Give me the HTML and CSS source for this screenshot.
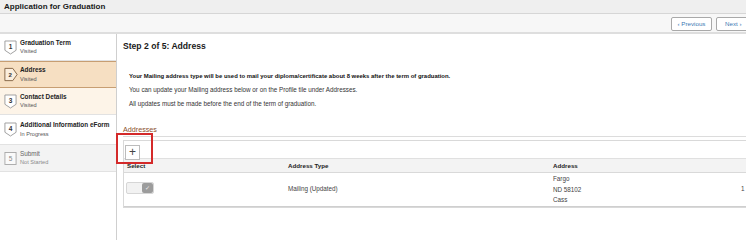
FILE: index.html
```html
<!DOCTYPE html>
<html>
<head>
<meta charset="utf-8">
<link rel="stylesheet" href="styles.css">
</head>
<body>
<div class="titlebar">Application for Graduation</div>
<div class="toolbar">
  <button class="navbtn prev">&#x2039; Previous</button>
  <button class="navbtn next">Next &#x203A;</button>
</div>
<div class="layout">
  <nav class="steps">
    <div class="step visited">
      <svg class="badge" viewBox="0 0 14 16"><path d="M1 1H13V11L7 15L1 11Z" fill="#fff" stroke="#9a9a9a" stroke-width="1"/><text x="7" y="10" text-anchor="middle">1</text></svg>
      <div class="stext"><div class="sname">Graduation Term</div><div class="sstat">Visited</div></div>
    </div>
    <div class="step active">
      <svg class="badge" viewBox="0 0 16 16"><path d="M1 1H10L15 8L10 15H1Z" fill="#fbeedd" stroke="#7a5a3a" stroke-width="1"/><text x="7" y="11" text-anchor="middle">2</text></svg>
      <div class="stext"><div class="sname">Address</div><div class="sstat">Visited</div></div>
    </div>
    <div class="step light">
      <svg class="badge" viewBox="0 0 14 16"><path d="M1 1H13V11L7 15L1 11Z" fill="#fff" stroke="#9a9a9a" stroke-width="1"/><text x="7" y="10" text-anchor="middle">3</text></svg>
      <div class="stext"><div class="sname">Contact Details</div><div class="sstat">Visited</div></div>
    </div>
    <div class="step tall">
      <svg class="badge" viewBox="0 0 14 16"><path d="M1 1H13V11L7 15L1 11Z" fill="#fff" stroke="#9a9a9a" stroke-width="1"/><text x="7" y="10" text-anchor="middle">4</text></svg>
      <div class="stext"><div class="sname">Additional Information eForm</div><div class="sstat">In Progress</div></div>
    </div>
    <div class="step disabled">
      <svg class="badge" viewBox="0 0 14 16"><rect x="1" y="1.5" width="12" height="13" fill="#fafafa" stroke="#a8a8a8" stroke-width="1"/><text x="7" y="11" text-anchor="middle">5</text></svg>
      <div class="stext"><div class="sname">Submit</div><div class="sstat">Not Started</div></div>
    </div>
  </nav>
  <main class="main">
    <h1 class="steptitle">Step 2 of 5: Address</h1>
    <div class="info">
      <p class="strong">Your Mailing address type will be used to mail your diploma/certificate about 8 weeks after the term of graduation.</p>
      <p>You can update your Mailing address below or on the Profile tile under Addresses.</p>
      <p>All updates must be made before the end of the term of graduation.</p>
    </div>
    <div class="section">
      <div class="sechead">Addresses</div>
      <div class="grid">
        <div class="gridbar"><button class="addbtn">+</button></div>
        <div class="row head">
          <div class="c1">Select</div><div class="c2">Address Type</div><div class="c3">Address</div><div class="c4"></div>
        </div>
        <div class="row data">
          <div class="c1"><span class="toggle"><span class="knob">&#x2713;</span></span></div>
          <div class="c2">Mailing (Updated)</div>
          <div class="c3"><div>Fargo</div><div>ND 58102</div><div>Cass</div></div>
          <div class="c4">1</div>
        </div>
      </div>
      <div class="highlight"></div>
    </div>
  </main>
</div>
</body>
</html>
```

FILE: styles.css
```css
* { box-sizing: border-box; }
html, body { margin: 0; padding: 0; }
body {
  width: 746px; height: 240px; overflow: hidden;
  font-family: "Liberation Sans", Arial, sans-serif;
  color: #222; background: #fff;
}
.titlebar {
  height: 14px; background: #efefef; border-bottom: 1px solid #d6d6d6;
  font-size: 8px; font-weight: bold; line-height: 13px; padding-left: 4px; color: #1a1a1a;
}
.toolbar {
  height: 20px; background: #f7f7f7; border-bottom: 2px solid #dedede;
  display: flex; justify-content: flex-end; align-items: center; gap: 4px; padding-top: 1px;
}
.navbtn {
  height: 14px; padding: 0; margin: 0; border: 1px solid #a9a9a9; border-radius: 2px;
  background: #fff; color: #3c78b4; font-family: "Liberation Sans", Arial, sans-serif;
  font-size: 6.2px; line-height: 12px;
}
.prev { width: 41px; }
.next { width: 32px; margin-right: -2px; text-align: left; padding-left: 8px; }
.layout { display: flex; height: 206px; }
.steps { width: 117px; border-right: 1px solid #cfcfcf; background: #fff; flex: none; }
.step {
  height: 27px; display: flex; align-items: center; gap: 3px; padding-left: 4px;
  border-bottom: 1px solid #e2e2e2;
}
.step.tall { height: 30px; }
.step.active { background: #f6dfc2; border: 1px solid #c79e72; border-left: none; border-right: none; height: 27px; }
.step.light { background: #fdf4e8; }
.step.disabled { background: #f3f3f3; }
.badge { width: 13px; height: 15px; flex: none; }
.active .badge { width: 14px; margin-right: -1px; }
.badge text { font-family: "Liberation Sans", Arial, sans-serif; font-size: 7px; font-weight: bold; fill: #333; }
.disabled .badge text { fill: #888; font-weight: normal; }
.stext { line-height: 8.5px; }
.sname { font-size: 6.4px; font-weight: bold; color: #222; white-space: nowrap; }
.sstat { font-size: 5.6px; color: #555; }
.disabled .sname { color: #666; font-weight: normal; }
.disabled .sstat { color: #8a8a8a; }
.main { flex: 1; padding-left: 6px; min-width: 0; }
.steptitle { margin: 0; font-size: 8.6px; font-weight: bold; line-height: 12px; padding-top: 6px; color: #1a1a1a; }
.info { padding-left: 6px; padding-top: 17px; }
.info p { margin: 0; font-size: 6.3px; line-height: 14px; color: #333; white-space: nowrap; }
.info p.strong { font-weight: bold; color: #111; font-size: 5.95px; }
.section { position: relative; margin-top: 14px; }
.sechead {
  font-size: 7.2px; color: #8a4f2b; line-height: 10px; border-bottom: 1px solid #dcdcdc;
  padding-bottom: 1px; margin-right: -10px;
}
.grid { margin-top: 3px; border: 1px solid #d9d9d9; border-right: none; margin-right: -10px; }
.gridbar { height: 18px; padding: 1px 0 0 1px; border-bottom: 1px solid #e0e0e0; }
.addbtn {
  width: 15px; height: 15px; padding: 0; margin: 0; border: 1px solid #bcbcbc; background: #fff;
  font-family: "Liberation Sans", Arial, sans-serif; font-size: 12px; line-height: 11px; color: #444;
}
.row { display: flex; }
.row.head {
  height: 14px; background: #f3f3f3; border-bottom: 1px solid #d9d9d9; font-size: 6.2px;
  font-weight: bold; line-height: 13px; color: #222;
}
.c1 { width: 164px; padding-left: 3px; }
.c2 { width: 265px; }
.c3 { width: 188px; }
.c4 { flex: 1; }
.row.data { height: 34px; font-size: 6.3px; color: #444; border-bottom: 1px solid #cfcfcf; }
.row.data .c1 { padding-top: 9px; padding-left: 2px; }
.row.data .c2 { line-height: 32px; }
.row.data .c3 { line-height: 10.5px; padding-top: 1px; }
.row.data .c4 { line-height: 32px; }
.toggle {
  display: flex; justify-content: flex-end; width: 28px; height: 12px; border: 1px solid #d6d6d6;
  border-radius: 2px; background: #f2f2f2;
}
.knob {
  width: 11px; height: 10px; background: #9c9c9c; border-radius: 2px; color: #eee;
  font-size: 6px; line-height: 10px; text-align: center;
}
.highlight {
  position: absolute; left: -7px; top: 8px; width: 37px; height: 31px; border: 2px solid #d42a2a;
}
```
